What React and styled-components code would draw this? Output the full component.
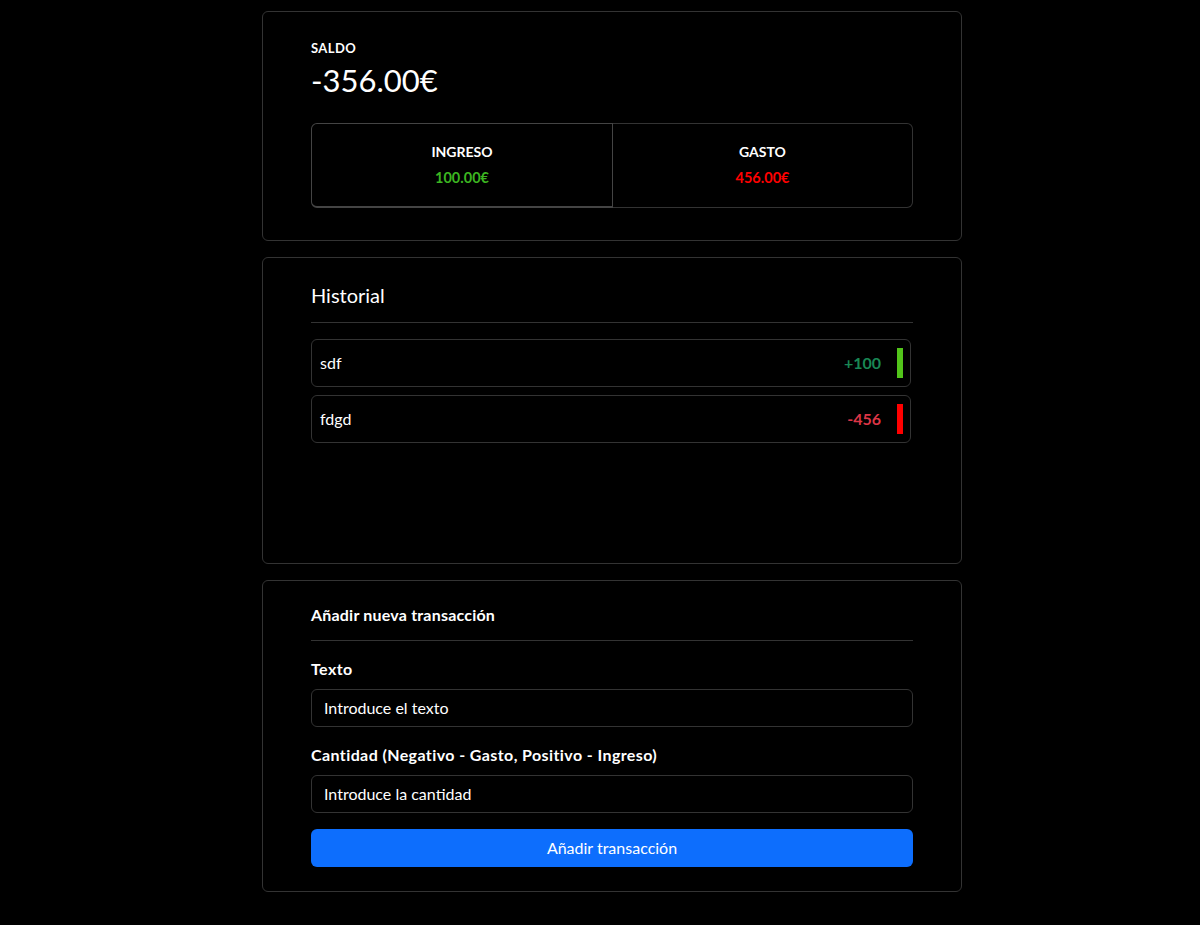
import React from 'react';
import styled, { createGlobalStyle } from 'styled-components';

const GlobalStyle = createGlobalStyle`
  body {
    margin: 0;
    background: #000;
    color: #fff;
    font-family: Lato, "Liberation Sans", sans-serif;
  }
  * { box-sizing: border-box; }
`;

const Page = styled.div`
  padding: 11px 0 0 24px;
  display: flex;
  justify-content: center;
`;

const Column = styled.div`
  width: 700px;
  display: flex;
  flex-direction: column;
  gap: 16px;
`;

const Card = styled.section`
  border: 1px solid #333;
  border-radius: 6px;
  padding: 24px 48px ${p => p.bottom || 24}px;
`;

const Caption = styled.div`
  font-size: 13px;
  font-weight: 700;
  letter-spacing: 0.4px;
  line-height: 24px;
`;

const Balance = styled.div`
  font-size: 31px;
  line-height: 40px;
`;

const Summary = styled.div`
  margin-top: 23px;
  display: grid;
  grid-template-columns: 302px 1fr;
  border-radius: 6px;
`;

const SummaryCell = styled.div`
  border: 1px solid ${p => (p.active ? '#444' : '#333')};
  border-bottom-width: ${p => (p.active ? 2 : 1)}px;
  border-radius: ${p => (p.active ? '6px 0 0 6px' : '0 6px 6px 0')};
  border-left-width: ${p => (p.active ? 1 : 0)}px;
  padding: 18px 0 ${p => (p.active ? 18 : 19)}px;
  display: flex;
  flex-direction: column;
  align-items: center;
  gap: 6px;
`;

const CellTitle = styled.div`
  font-size: 14px;
  font-weight: 700;
  line-height: 20px;
`;

const CellAmount = styled.div`
  font-size: 14.5px;
  font-weight: 700;
  line-height: 20px;
  color: ${p => p.color};
`;

const SectionTitle = styled.div`
  font-size: ${p => p.size}px;
  font-weight: ${p => p.weight};
  letter-spacing: ${p => p.ls || 0}px;
  line-height: ${p => p.lh}px;
  padding-bottom: ${p => p.pb}px;
  border-bottom: 1px solid #333;
`;

const List = styled.ul`
  list-style: none;
  margin: 16px 0 0;
  padding: 0;
  width: 600px;
  min-height: 192px;
  display: flex;
  flex-direction: column;
  gap: 8px;
`;

const Item = styled.li`
  height: 48px;
  border: 1px solid #333;
  border-radius: 6px;
  padding: 0 7px 1px 8px;
  display: flex;
  align-items: center;
  font-size: 16px;
`;

const ItemText = styled.span`
  flex: 1;
`;

const ItemAmount = styled.span`
  font-weight: 700;
  color: ${p => p.color};
`;

const Bar = styled.span`
  width: 6px;
  height: 30px;
  margin-left: 16px;
  background: ${p => p.color};
`;

const Label = styled.label`
  display: block;
  margin-top: 18px;
  font-size: 16px;
  font-weight: 700;
  letter-spacing: 0.4px;
  line-height: 20px;
`;

const Input = styled.input`
  display: block;
  width: 100%;
  height: 38px;
  margin-top: 10px;
  padding: 0 12px 1px;
  background: #000;
  border: 1px solid #333;
  border-radius: 6px;
  color: #fff;
  font-family: inherit;
  font-size: 16px;
  &::placeholder { color: #fff; opacity: 1; }
`;

const Button = styled.button`
  display: block;
  width: 100%;
  height: 38px;
  margin-top: 16px;
  padding: 0 0 1px;
  border: none;
  border-radius: 6px;
  background: #0d6efd;
  color: #fff;
  font-family: inherit;
  font-size: 16px;
`;

const transactions = [
  { id: 1, text: 'sdf', amount: 100 },
  { id: 2, text: 'fdgd', amount: -456 },
];

export default function App() {
  return (
    <>
      <GlobalStyle />
      <Page>
        <Column>
          <Card bottom={32}>
            <Caption>SALDO</Caption>
            <Balance>-356.00€</Balance>
            <Summary>
              <SummaryCell active>
                <CellTitle>INGRESO</CellTitle>
                <CellAmount color="#3cb521">100.00€</CellAmount>
              </SummaryCell>
              <SummaryCell>
                <CellTitle>GASTO</CellTitle>
                <CellAmount color="#ff0000">456.00€</CellAmount>
              </SummaryCell>
            </Summary>
          </Card>

          <Card bottom={32}>
            <SectionTitle size={20} weight={400} lh={26} pb={14}>Historial</SectionTitle>
            <List>
              {transactions.map(t => (
                <Item key={t.id}>
                  <ItemText>{t.text}</ItemText>
                  <ItemAmount color={t.amount > 0 ? '#198754' : '#dc3545'}>
                    {t.amount > 0 ? `+${t.amount}` : t.amount}
                  </ItemAmount>
                  <Bar color={t.amount > 0 ? '#52c41a' : '#ff0000'} />
                </Item>
              ))}
            </List>
          </Card>

          <Card>
            <SectionTitle size={16} weight={700} ls={0.2} lh={20} pb={15}>Añadir nueva transacción</SectionTitle>
            <Label>Texto</Label>
            <Input placeholder="Introduce el texto" />
            <Label>Cantidad (Negativo - Gasto, Positivo - Ingreso)</Label>
            <Input placeholder="Introduce la cantidad" />
            <Button>Añadir transacción</Button>
          </Card>
        </Column>
      </Page>
    </>
  );
}
